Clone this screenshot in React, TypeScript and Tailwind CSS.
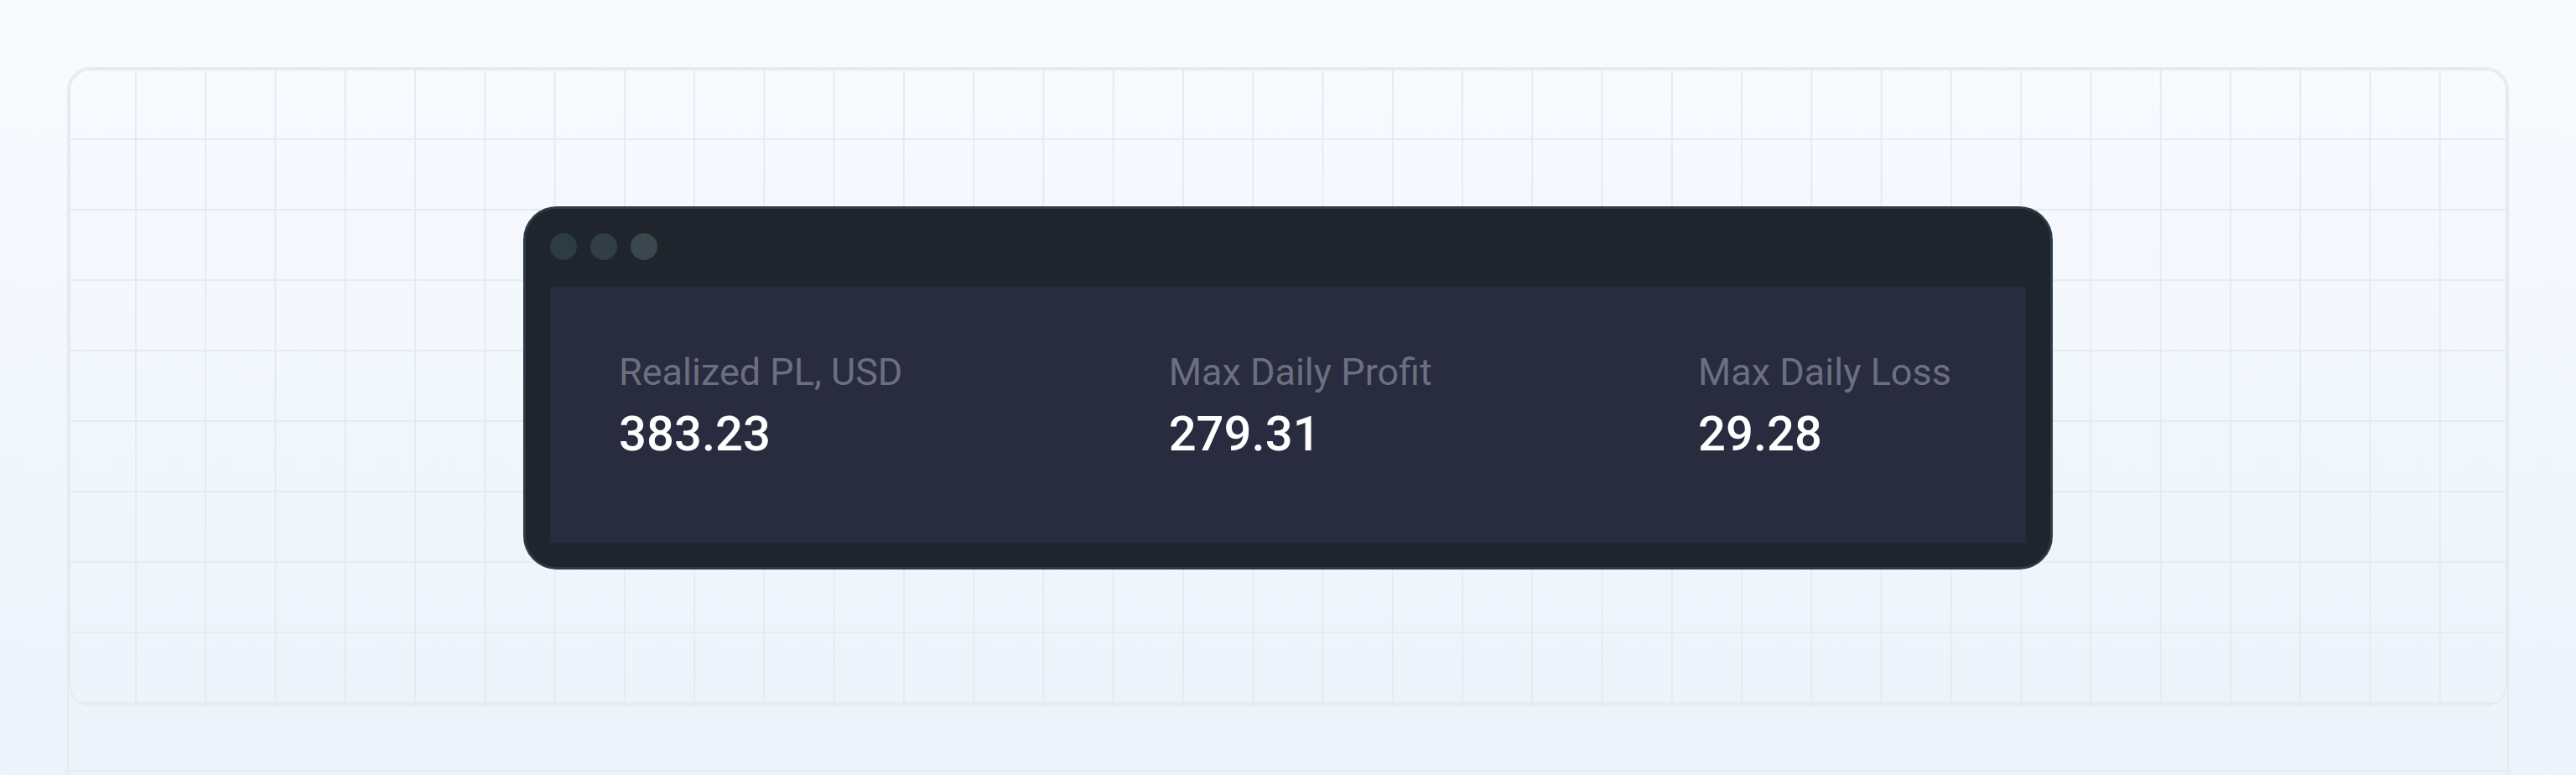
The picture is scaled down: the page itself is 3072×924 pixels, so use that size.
const stats = [
  { label: "Realized PL, USD", value: "383.23" },
  { label: "Max Daily Profit", value: "279.31" },
  { label: "Max Daily Loss", value: "29.28" },
];

const dots = ["bg-[#2c3b44]", "bg-[#313e46]", "bg-[#3a474c]"];

function StatsWindow() {
  return (
    <div className="w-[1824px] rounded-[40px] border-[3px] border-[#2d3a45] bg-[#1f252d] p-[29px]">
      <div className="flex gap-4">
        {dots.map((c) => (
          <span key={c} className={`h-8 w-8 rounded-full ${c}`} />
        ))}
      </div>
      <div className="mt-8 flex h-[305px] items-start justify-between bg-[#292b3f] pl-[82px] pr-[89px] pt-[79px]">
        {stats.map((s) => (
          <div key={s.label} className="flex flex-col">
            <p className="text-[45px] leading-none text-[#6b7080]">{s.label}</p>
            <p className="mt-[22px] text-[58px] font-medium leading-none text-white">{s.value}</p>
          </div>
        ))}
      </div>
    </div>
  );
}

export default function App() {
  return (
    <div className="h-[924px] overflow-hidden bg-gradient-to-b from-[#f8fbfe] to-[#ecf3fb] px-[80px] pt-[80px] font-['Roboto',sans-serif]">
      <div className="rounded-t-[28px] border-2 border-[#e6ebf0]">
        <div className="flex h-[760px] items-center justify-center rounded-[26px] border-2 border-[#e6ebf0] bg-[linear-gradient(to_right,#e5ebf0_2px,transparent_2px),linear-gradient(to_bottom,#e5ebf0_2px,transparent_2px)] bg-size-[83.27px_84px] bg-position-[77px_81px]">
          <StatsWindow />
        </div>
        <div className="h-[76px]" />
        <div className="h-[200px] border-t-2 border-[#e6ebf0]" />
      </div>
    </div>
  );
}
